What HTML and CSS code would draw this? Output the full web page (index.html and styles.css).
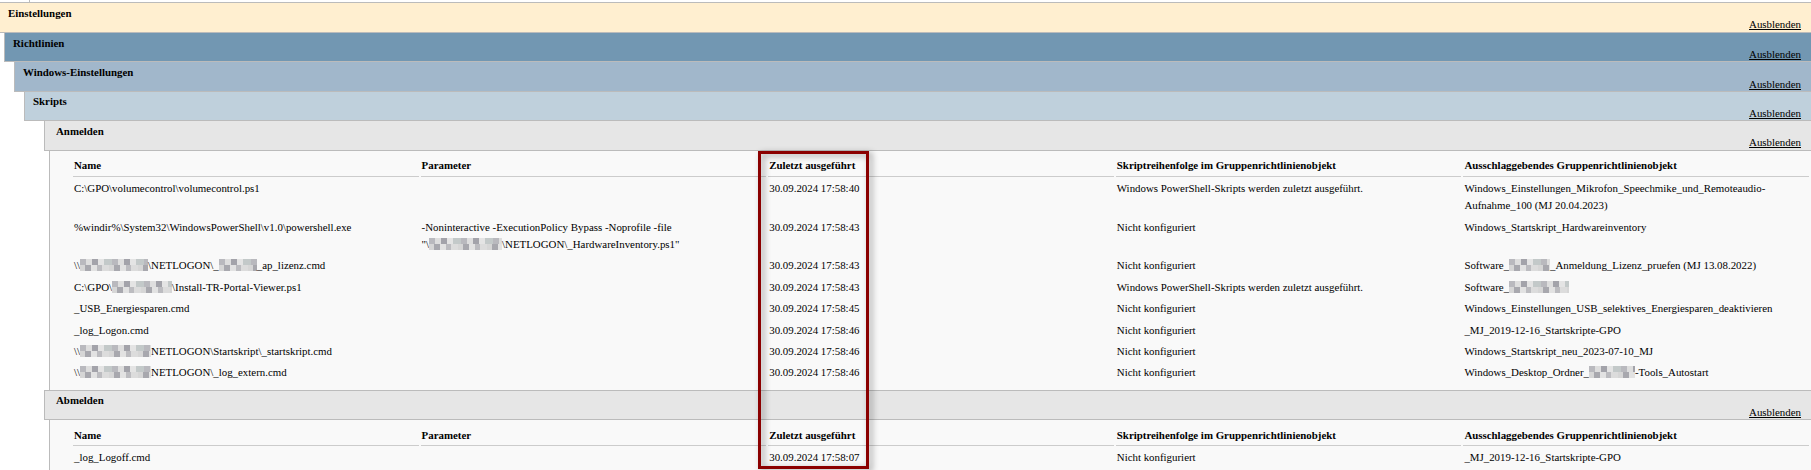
FILE: index.html
```html
<!DOCTYPE html>
<html lang="de">
<head>
<meta charset="utf-8">
<title>Einstellungen</title>
<link rel="stylesheet" href="styles.css">
</head>
<body>
<div class="strip"></div>
<div class="band l0"><b>Einstellungen</b><a href="#">Ausblenden</a></div>
<div class="band l1"><b>Richtlinien</b><a href="#">Ausblenden</a></div>
<div class="band l2"><b>Windows-Einstellungen</b><a href="#">Ausblenden</a></div>
<div class="band l3"><b>Skripts</b><a href="#">Ausblenden</a></div>
<div class="band l4"><b>Anmelden</b><a href="#">Ausblenden</a></div>
<div class="content">
<table>
<tr><th>Name</th><th>Parameter</th><th>Zuletzt ausgeführt</th><th>Skriptreihenfolge im Gruppenrichtlinienobjekt</th><th>Ausschlaggebendes Gruppenrichtlinienobjekt</th></tr>
<tr><td>C:\GPO\volumecontrol\volumecontrol.ps1</td><td></td><td>30.09.2024 17:58:40</td><td>Windows PowerShell-Skripts werden zuletzt ausgeführt.</td><td>Windows_Einstellungen_Mikrofon_Speechmike_und_Remoteaudio-Aufnahme_100 (MJ 20.04.2023)</td></tr>
<tr><td>%windir%\System32\WindowsPowerShell\v1.0\powershell.exe</td><td>-Noninteractive -ExecutionPolicy Bypass -Noprofile -file <span class="nb">"\<span class="blur w73"></span>\NETLOGON\_HardwareInventory.ps1"</span></td><td>30.09.2024 17:58:43</td><td>Nicht konfiguriert</td><td>Windows_Startskript_Hardwareinventory</td></tr>
<tr><td>\\<span class="blur w68"></span>\NETLOGON\_<span class="blur w38"></span>_ap_lizenz.cmd</td><td></td><td>30.09.2024 17:58:43</td><td>Nicht konfiguriert</td><td>Software_<span class="blur w41"></span>_Anmeldung_Lizenz_pruefen (MJ 13.08.2022)</td></tr>
<tr><td>C:\GPO\<span class="blur w60"></span>\Install-TR-Portal-Viewer.ps1</td><td></td><td>30.09.2024 17:58:43</td><td>Windows PowerShell-Skripts werden zuletzt ausgeführt.</td><td>Software_<span class="blur w60"></span></td></tr>
<tr><td>_USB_Energiesparen.cmd</td><td></td><td>30.09.2024 17:58:45</td><td>Nicht konfiguriert</td><td>Windows_Einstellungen_USB_selektives_Energiesparen_deaktivieren</td></tr>
<tr><td>_log_Logon.cmd</td><td></td><td>30.09.2024 17:58:46</td><td>Nicht konfiguriert</td><td>_MJ_2019-12-16_Startskripte-GPO</td></tr>
<tr><td>\\<span class="blur w71"></span>NETLOGON\Startskript\_startskript.cmd</td><td></td><td>30.09.2024 17:58:46</td><td>Nicht konfiguriert</td><td>Windows_Startskript_neu_2023-07-10_MJ</td></tr>
<tr><td>\\<span class="blur w71"></span>NETLOGON\_log_extern.cmd</td><td></td><td>30.09.2024 17:58:46</td><td>Nicht konfiguriert</td><td>Windows_Desktop_Ordner_<span class="blur w46"></span>-Tools_Autostart</td></tr>
</table>
</div>
<div class="band l4 topline"><b>Abmelden</b><a href="#">Ausblenden</a></div>
<div class="content">
<table>
<tr><th>Name</th><th>Parameter</th><th>Zuletzt ausgeführt</th><th>Skriptreihenfolge im Gruppenrichtlinienobjekt</th><th>Ausschlaggebendes Gruppenrichtlinienobjekt</th></tr>
<tr><td>_log_Logoff.cmd</td><td></td><td>30.09.2024 17:58:07</td><td>Nicht konfiguriert</td><td>_MJ_2019-12-16_Startskripte-GPO</td></tr>
</table>
</div>
<div class="highlight"></div>
</body>
</html>
```
FILE: styles.css
```css
html, body {
  margin: 0;
  padding: 0;
  height: 470px;
  overflow: hidden;
  background: #fff;
}
body {
  position: relative;
  font-family: "Liberation Serif", "Times New Roman", serif;
  font-size: 10.88px;
  line-height: 17.4px;
  color: #000;
}
.strip {
  height: 2px;
  margin-left: 29px;
  border-left: 1px solid #bbb;
}
.band {
  display: flex;
  flex-direction: column;
  height: 28.4px;
  border-bottom: 1px solid #bbb;
  padding-left: 8px;
  padding-right: 10px;
}
.band b { margin-top: 1.6px; }
.band a {
  align-self: flex-end;
  color: #000;
  margin-top: -5.7px;
}
.l0 { background: #ffefd0; border-top: 1px solid #bbb; height: 29px; }
.l1 { background: #7297b2; margin-left: 4px; border-left: 1px solid #bbb; }
.l2 { background: #a1b7cb; margin-left: 14px; border-left: 1px solid #bbb; }
.l3 { background: #bfd0dc; margin-left: 24px; border-left: 1px solid #bbb; }
.l4 { background: #e6e6e6; margin-left: 44px; border-left: 1px solid #bbb; padding-left: 11px; }
.topline { border-top: 1px solid #bbb; }
.content {
  margin-left: 49px;
  border-left: 1px solid #bbb;
  background: #f9f9f9;
  padding: 3.8px 0 5px 21px;
}
table {
  table-layout: fixed;
  width: 1740px;
  border-collapse: separate;
  border-spacing: 2px;
}
th {
  text-align: left;
  padding: 1px;
  border-bottom: 1px solid #ccc;
}
td {
  vertical-align: top;
  padding: 1px;
}
.nb { white-space: nowrap; }
.blur {
  display: inline-block;
  height: 12px;
  vertical-align: -2px;
  background:
    repeating-linear-gradient(90deg, #b9b9be 0 6px, #dedede 6px 12px, #a3a3aa 12px 18px, #e4e4e4 18px 24px, #c3c9c9 24px 32px) top / 100% 6px no-repeat,
    repeating-linear-gradient(90deg, #d6d6d6 0 5px, #a8a8ae 5px 11px, #e2e2e2 11px 17px, #bcbcc0 17px 22px, #dcdcdc 22px 29px) bottom / 100% 6px no-repeat;
}
.w38 { width: 38px; }
.w41 { width: 41px; }
.w46 { width: 46px; }
.w60 { width: 60px; }
.w68 { width: 68px; }
.w71 { width: 71px; }
.w73 { width: 73px; }
.highlight {
  position: absolute;
  left: 758px;
  top: 151px;
  width: 105px;
  height: 312px;
  border: 3px solid #8b0000;
  filter: drop-shadow(3px 2px 3px rgba(0, 0, 0, 0.4));
}
```
